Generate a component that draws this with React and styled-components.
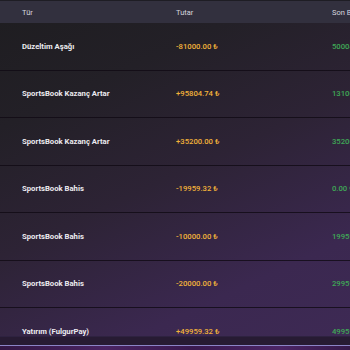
import styled, { createGlobalStyle } from "styled-components";

const GlobalStyle = createGlobalStyle`
  html, body {
    margin: 0;
    padding: 0;
    width: 350px;
    height: 350px;
    overflow: hidden;
    background: #1c1b1e;
    font-family: Roboto, "Liberation Sans", Arial, sans-serif;
  }
`;

const Page = styled.div`
  width: 350px;
  height: 350px;
  overflow: hidden;
  position: relative;
  background: linear-gradient(155deg, #1e1d20 0%, #232027 25%, #2d2335 50%, #3b2850 78%, #3e2a55 100%);
`;

const Table = styled.div`
  width: 500px;
  display: grid;
  grid-template-columns: 176px 156px 168px;
`;

const HeaderCell = styled.div`
  height: 23px;
  border-top: 1px solid #1e1d24;
  background: #32303e;
  color: #d6d5de;
  font-size: 7.5px;
  display: flex;
  align-items: center;
  padding-left: ${(p) => (p.$first ? "22px" : "0")};
  box-sizing: border-box;
`;

const Cell = styled.div`
  height: 47.5px;
  display: flex;
  align-items: center;
  padding-left: ${(p) => (p.$first ? "22px" : "0")};
  box-sizing: border-box;
  border-bottom: 1px solid rgba(16, 10, 20, 0.8);
  font-size: 7.7px;
  white-space: nowrap;
  overflow: hidden;
  color: ${(p) => p.$color};
  font-weight: ${(p) => (p.$bold ? 700 : 500)};
`;

const BottomBar = styled.div`
  position: absolute;
  left: 0;
  right: 0;
  bottom: 0;
  height: 13px;
  background: #271b33;
  border-top: 1px solid #2e2240;
`;

const Glow = styled.div`
  position: absolute;
  left: 0;
  right: 0;
  bottom: 0;
  height: 4px;
  border-top: 1px solid #8b84c6;
  background: linear-gradient(90deg, #341845, #4a2463 30%, #3a1a4f 55%, #4c2566 80%, #361a4a);
`;

const rows = [
  { type: "Düzeltim Aşağı", amount: "-81000.00 ₺", balance: "50004.74 ₺" },
  { type: "SportsBook Kazanç Artar", amount: "+95804.74 ₺", balance: "131004.74 ₺" },
  { type: "SportsBook Kazanç Artar", amount: "+35200.00 ₺", balance: "35200.00 ₺" },
  { type: "SportsBook Bahis", amount: "-19959.32 ₺", balance: "0.00 ₺" },
  { type: "SportsBook Bahis", amount: "-10000.00 ₺", balance: "19959.32 ₺" },
  { type: "SportsBook Bahis", amount: "-20000.00 ₺", balance: "29959.32 ₺" },
  { type: "Yatırım (FulgurPay)", amount: "+49959.32 ₺", balance: "49959.32 ₺" },
];

const App = () => {
  return (
    <Page>
      <GlobalStyle />
      <Table>
        <HeaderCell $first>Tür</HeaderCell>
        <HeaderCell>Tutar</HeaderCell>
        <HeaderCell>Son Bakiye</HeaderCell>
        {rows.map((r, i) => [
          <Cell key={i + "t"} $first $bold $color="#ecebef">
            {r.type}
          </Cell>,
          <Cell key={i + "a"} $color="#f2b23a">
            {r.amount}
          </Cell>,
          <Cell key={i + "b"} $color="#3fa856">
            {r.balance}
          </Cell>,
        ])}
      </Table>
      <BottomBar>
        <Glow />
      </BottomBar>
    </Page>
  );
};

export default App;
